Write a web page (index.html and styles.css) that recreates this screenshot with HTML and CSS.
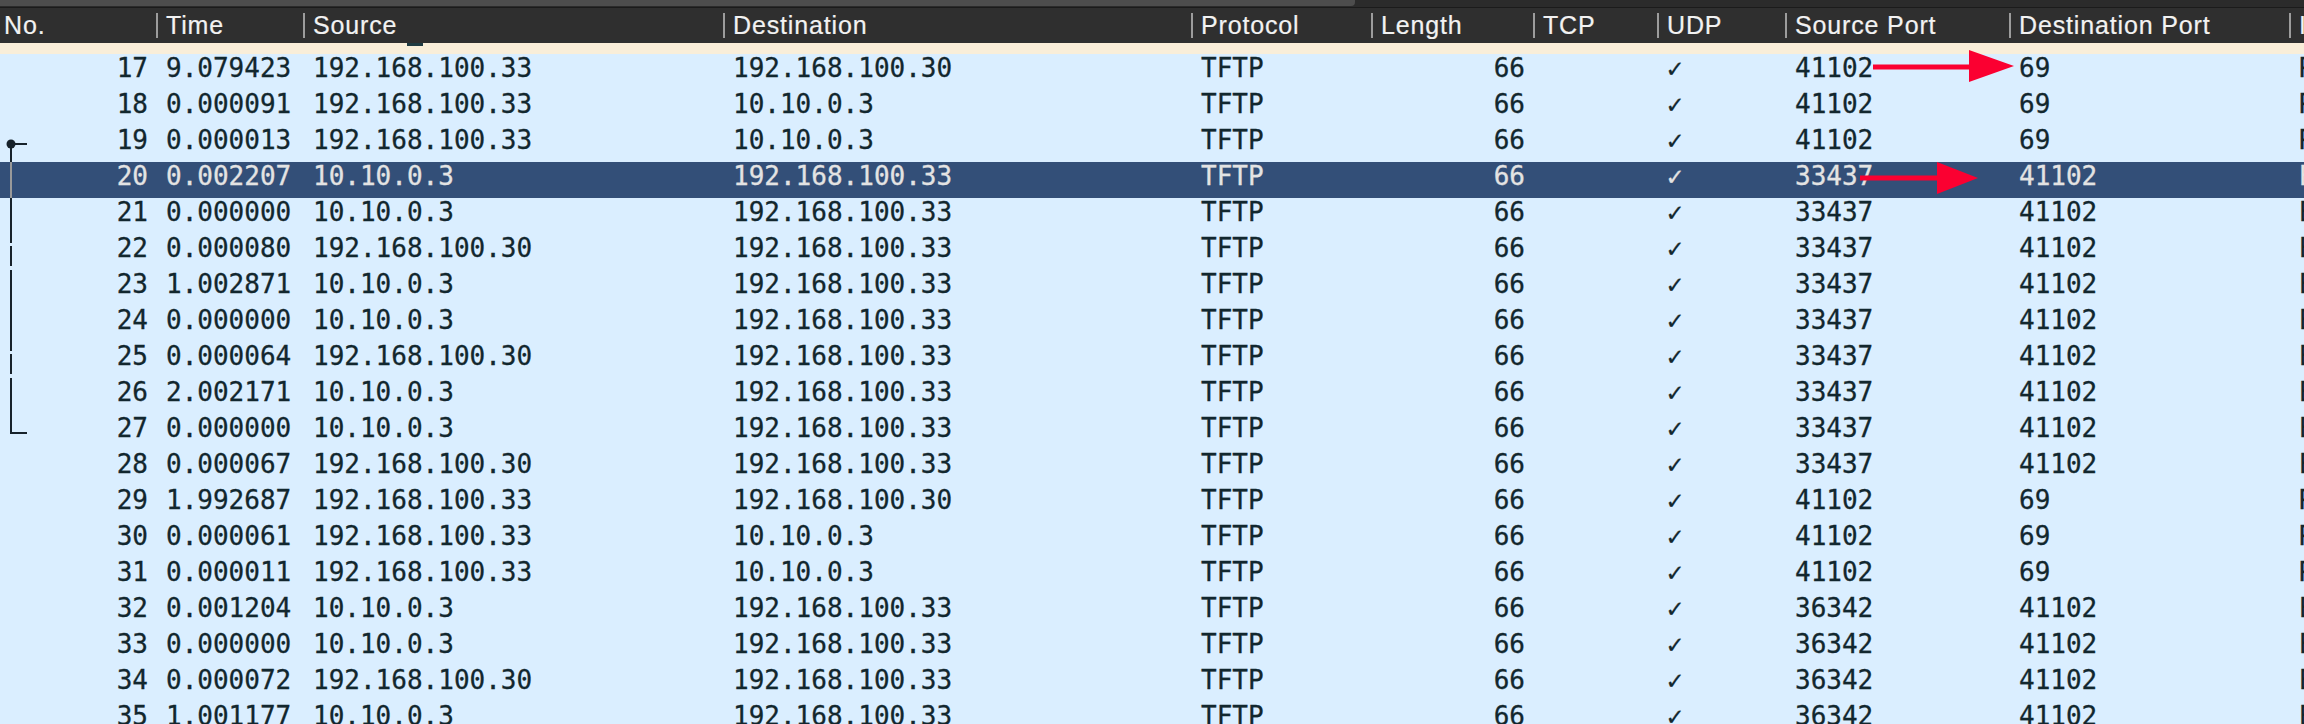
FILE: index.html
```html
<!DOCTYPE html>
<html>
<head>
<meta charset="utf-8">
<link rel="stylesheet" href="styles.css">
</head>
<body>
<div class="screen">
  <div class="topbar"><div class="thumb"></div></div>
  <div class="header">
    <div class="hcell first"><span class="label">No.</span></div>
    <div class="hcell"><span class="sep"></span><span class="label">Time</span></div>
    <div class="hcell"><span class="sep"></span><span class="label">Source</span></div>
    <div class="hcell"><span class="sep"></span><span class="label">Destination</span></div>
    <div class="hcell"><span class="sep"></span><span class="label">Protocol</span></div>
    <div class="hcell"><span class="sep"></span><span class="label">Length</span></div>
    <div class="hcell"><span class="sep"></span><span class="label">TCP</span></div>
    <div class="hcell"><span class="sep"></span><span class="label">UDP</span></div>
    <div class="hcell"><span class="sep"></span><span class="label">Source Port</span></div>
    <div class="hcell"><span class="sep"></span><span class="label">Destination Port</span></div>
    <div class="hcell"><span class="sep"></span><span class="label">Info</span></div>
  </div>
  <div class="partial"><span class="mark"></span></div>
  <div class="rows">
    <div class="row"><span class="c num">17</span><span class="c">9.079423</span><span class="c">192.168.100.33</span><span class="c">192.168.100.30</span><span class="c">TFTP</span><span class="c num">66</span><span class="c"></span><span class="c">✓</span><span class="c">41102</span><span class="c">69</span><span class="c">Read Request, File: config.bin</span></div>
    <div class="row"><span class="c num">18</span><span class="c">0.000091</span><span class="c">192.168.100.33</span><span class="c">10.10.0.3</span><span class="c">TFTP</span><span class="c num">66</span><span class="c"></span><span class="c">✓</span><span class="c">41102</span><span class="c">69</span><span class="c">Read Request, File: config.bin</span></div>
    <div class="row"><span class="c num">19</span><span class="c">0.000013</span><span class="c">192.168.100.33</span><span class="c">10.10.0.3</span><span class="c">TFTP</span><span class="c num">66</span><span class="c"></span><span class="c">✓</span><span class="c">41102</span><span class="c">69</span><span class="c">Read Request, File: config.bin</span></div>
    <div class="row selected"><span class="c num">20</span><span class="c">0.002207</span><span class="c">10.10.0.3</span><span class="c">192.168.100.33</span><span class="c">TFTP</span><span class="c num">66</span><span class="c"></span><span class="c">✓</span><span class="c">33437</span><span class="c">41102</span><span class="c">Error Code, Code: File not found</span></div>
    <div class="row"><span class="c num">21</span><span class="c">0.000000</span><span class="c">10.10.0.3</span><span class="c">192.168.100.33</span><span class="c">TFTP</span><span class="c num">66</span><span class="c"></span><span class="c">✓</span><span class="c">33437</span><span class="c">41102</span><span class="c">Error Code, Code: File not found</span></div>
    <div class="row"><span class="c num">22</span><span class="c">0.000080</span><span class="c">192.168.100.30</span><span class="c">192.168.100.33</span><span class="c">TFTP</span><span class="c num">66</span><span class="c"></span><span class="c">✓</span><span class="c">33437</span><span class="c">41102</span><span class="c">Error Code, Code: File not found</span></div>
    <div class="row"><span class="c num">23</span><span class="c">1.002871</span><span class="c">10.10.0.3</span><span class="c">192.168.100.33</span><span class="c">TFTP</span><span class="c num">66</span><span class="c"></span><span class="c">✓</span><span class="c">33437</span><span class="c">41102</span><span class="c">Error Code, Code: File not found</span></div>
    <div class="row"><span class="c num">24</span><span class="c">0.000000</span><span class="c">10.10.0.3</span><span class="c">192.168.100.33</span><span class="c">TFTP</span><span class="c num">66</span><span class="c"></span><span class="c">✓</span><span class="c">33437</span><span class="c">41102</span><span class="c">Error Code, Code: File not found</span></div>
    <div class="row"><span class="c num">25</span><span class="c">0.000064</span><span class="c">192.168.100.30</span><span class="c">192.168.100.33</span><span class="c">TFTP</span><span class="c num">66</span><span class="c"></span><span class="c">✓</span><span class="c">33437</span><span class="c">41102</span><span class="c">Error Code, Code: File not found</span></div>
    <div class="row"><span class="c num">26</span><span class="c">2.002171</span><span class="c">10.10.0.3</span><span class="c">192.168.100.33</span><span class="c">TFTP</span><span class="c num">66</span><span class="c"></span><span class="c">✓</span><span class="c">33437</span><span class="c">41102</span><span class="c">Error Code, Code: File not found</span></div>
    <div class="row"><span class="c num">27</span><span class="c">0.000000</span><span class="c">10.10.0.3</span><span class="c">192.168.100.33</span><span class="c">TFTP</span><span class="c num">66</span><span class="c"></span><span class="c">✓</span><span class="c">33437</span><span class="c">41102</span><span class="c">Error Code, Code: File not found</span></div>
    <div class="row"><span class="c num">28</span><span class="c">0.000067</span><span class="c">192.168.100.30</span><span class="c">192.168.100.33</span><span class="c">TFTP</span><span class="c num">66</span><span class="c"></span><span class="c">✓</span><span class="c">33437</span><span class="c">41102</span><span class="c">Error Code, Code: File not found</span></div>
    <div class="row"><span class="c num">29</span><span class="c">1.992687</span><span class="c">192.168.100.33</span><span class="c">192.168.100.30</span><span class="c">TFTP</span><span class="c num">66</span><span class="c"></span><span class="c">✓</span><span class="c">41102</span><span class="c">69</span><span class="c">Read Request, File: config.bin</span></div>
    <div class="row"><span class="c num">30</span><span class="c">0.000061</span><span class="c">192.168.100.33</span><span class="c">10.10.0.3</span><span class="c">TFTP</span><span class="c num">66</span><span class="c"></span><span class="c">✓</span><span class="c">41102</span><span class="c">69</span><span class="c">Read Request, File: config.bin</span></div>
    <div class="row"><span class="c num">31</span><span class="c">0.000011</span><span class="c">192.168.100.33</span><span class="c">10.10.0.3</span><span class="c">TFTP</span><span class="c num">66</span><span class="c"></span><span class="c">✓</span><span class="c">41102</span><span class="c">69</span><span class="c">Read Request, File: config.bin</span></div>
    <div class="row"><span class="c num">32</span><span class="c">0.001204</span><span class="c">10.10.0.3</span><span class="c">192.168.100.33</span><span class="c">TFTP</span><span class="c num">66</span><span class="c"></span><span class="c">✓</span><span class="c">36342</span><span class="c">41102</span><span class="c">Error Code, Code: File not found</span></div>
    <div class="row"><span class="c num">33</span><span class="c">0.000000</span><span class="c">10.10.0.3</span><span class="c">192.168.100.33</span><span class="c">TFTP</span><span class="c num">66</span><span class="c"></span><span class="c">✓</span><span class="c">36342</span><span class="c">41102</span><span class="c">Error Code, Code: File not found</span></div>
    <div class="row"><span class="c num">34</span><span class="c">0.000072</span><span class="c">192.168.100.30</span><span class="c">192.168.100.33</span><span class="c">TFTP</span><span class="c num">66</span><span class="c"></span><span class="c">✓</span><span class="c">36342</span><span class="c">41102</span><span class="c">Error Code, Code: File not found</span></div>
    <div class="row"><span class="c num">35</span><span class="c">1.001177</span><span class="c">10.10.0.3</span><span class="c">192.168.100.33</span><span class="c">TFTP</span><span class="c num">66</span><span class="c"></span><span class="c">✓</span><span class="c">36342</span><span class="c">41102</span><span class="c">Error Code, Code: File not found</span></div>
  </div>
  <svg class="overlay" width="2304" height="724" viewBox="0 0 2304 724">
    <g stroke="#17222b" stroke-width="2" fill="none">
      <path d="M11 144 H27"/>
      <path d="M11 144 V162"/>
      <path d="M11 198 V234"/>
      <path d="M11 234 V270" stroke-dasharray="9 3 20 4"/>
      <path d="M11 270 V342"/>
      <path d="M11 342 V378" stroke-dasharray="9 3 20 4"/>
      <path d="M11 378 V433 H27"/>
    </g>
    <path d="M11 162 V198" stroke="#9a9a9a" stroke-width="2"/>
    <circle cx="11" cy="144" r="4.5" fill="#17222b"/>
    <g fill="#fb0031">
      <rect x="1873" y="64.5" width="97" height="5"/>
      <polygon points="1969,50 2014,66 1969,82"/>
      <rect x="1860" y="175.5" width="78" height="5"/>
      <polygon points="1937,162 1978,178 1937,194"/>
    </g>
  </svg>
</div>
</body>
</html>
```
FILE: styles.css
```css
html, body {
  margin: 0;
  padding: 0;
  overflow: hidden;
  background: #daeeff;
}
.screen {
  position: relative;
  width: 2304px;
  height: 724px;
  overflow: hidden;
  background: #daeeff;
}
.topbar {
  height: 7px;
  background: #2b2b2b;
  border-bottom: 1px solid #1b1b1b;
  display: flex;
}
.thumb {
  width: 1355px;
  height: 6px;
  background: #4d4d4d;
  border-radius: 0 0 4px 0;
}
.header,
.row {
  display: grid;
  grid-template-columns: 156px 147px 420px 468px 180px 162px 124px 128px 224px 280px 15px;
}
.header {
  height: 35px;
  background: #2f2f2f;
  color: #f2f2f2;
  font-family: "Liberation Sans", Arial, sans-serif;
  font-size: 25px;
  letter-spacing: 0.85px;
  line-height: 35px;
  -webkit-text-stroke: 0.2px #f2f2f2;
}
.hcell {
  display: flex;
  align-items: center;
  gap: 8px;
  white-space: nowrap;
  overflow: hidden;
}
.hcell.first {
  padding-left: 4px;
}
.sep {
  flex: none;
  width: 2px;
  height: 25px;
  background: #9c9c9c;
}
.partial {
  position: relative;
  height: 11px;
  background: #f9eed9;
}
.mark {
  position: absolute;
  left: 407px;
  top: 0;
  width: 16px;
  height: 3px;
  background: #1f3b42;
}
.rows {
  font-family: "DejaVu Sans Mono", "Liberation Mono", monospace;
  font-size: 26px;
  color: #12272e;
  -webkit-text-stroke: 0.3px currentColor;
}
.row {
  height: 36px;
  line-height: 28px;
  background: #daeeff;
}
.row.selected {
  background: #334f78;
  color: #e3e3e3;
}
.c {
  padding-left: 10px;
  white-space: nowrap;
  overflow: hidden;
}
.c.num {
  padding-left: 0;
  padding-right: 8px;
  text-align: right;
}
.overlay {
  position: absolute;
  left: 0;
  top: 0;
}
```
